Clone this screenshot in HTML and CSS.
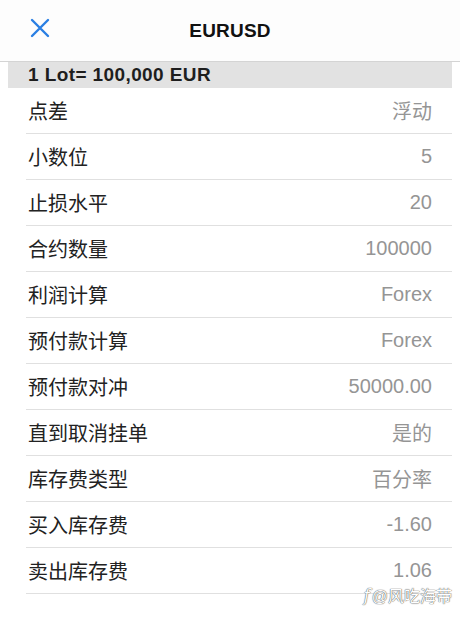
FILE: index.html
```html
<!DOCTYPE html>
<html lang="zh-CN">
<head>
    <meta charset="UTF-8">
    <meta name="viewport" content="width=device-width, initial-scale=1.0">
    <title>EURUSD</title>
    <link rel="stylesheet" href="styles.css">
</head>
<body>
    <div class="page">
        <header class="top-bar">
            <span class="close-btn">
                <svg width="20" height="20" viewBox="0 0 20 20">
                    <path d="M2 2 L18 18 M18 2 L2 18" stroke="#2a7fe3" stroke-width="2.4" stroke-linecap="round" fill="none"/>
                </svg>
            </span>
            <h1>EURUSD</h1>
        </header>

        <div class="lot-bar">1 Lot= 100,000 EUR</div>

        <ul class="spec-list">
            <li><span>点差</span><span class="val">浮动</span></li>
            <li><span>小数位</span><span class="val">5</span></li>
            <li><span>止损水平</span><span class="val">20</span></li>
            <li><span>合约数量</span><span class="val">100000</span></li>
            <li><span>利润计算</span><span class="val">Forex</span></li>
            <li><span>预付款计算</span><span class="val">Forex</span></li>
            <li><span>预付款对冲</span><span class="val">50000.00</span></li>
            <li><span>直到取消挂单</span><span class="val">是的</span></li>
            <li><span>库存费类型</span><span class="val">百分率</span></li>
            <li><span>买入库存费</span><span class="val">-1.60</span></li>
            <li><span>卖出库存费</span><span class="val">1.06</span></li>
        </ul>

        <div class="watermark"><span class="wm-icon">f</span>@风吃海带</div>
    </div>
</body>
</html>
```

FILE: styles.css
```css
* {
    margin: 0;
    padding: 0;
    box-sizing: border-box;
    font-family: 'Liberation Sans', 'Noto Sans CJK SC', sans-serif;
}

body {
    background: #fff;
    color: #222;
}

.page {
    position: relative;
    width: 460px;
    height: 627px;
    padding: 0 8px;
}

.top-bar {
    height: 62px;
    display: flex;
    align-items: center;
    justify-content: center;
    position: relative;
    background: #fdfdfd;
    border-bottom: 1px solid #d4d4d4;
    margin: 0 -8px;
}

.close-btn {
    position: absolute;
    left: 30px;
    top: 18px;
    width: 20px;
    height: 20px;
}

.top-bar h1 {
    font-size: 19px;
    font-weight: bold;
    color: #111;
    letter-spacing: 0.2px;
}

.lot-bar {
    height: 26px;
    line-height: 26px;
    background: #e2e2e2;
    padding-left: 20px;
    font-size: 19px;
    font-weight: bold;
    letter-spacing: 0.4px;
    color: #1e1e1e;
}

.spec-list {
    list-style: none;
    padding-left: 18px;
}

.spec-list li {
    height: 46px;
    display: flex;
    align-items: center;
    justify-content: space-between;
    padding: 0 20px 0 2px;
    border-bottom: 1px solid #e0e0e0;
    font-size: 20px;
    color: #222;
}

.spec-list .val {
    color: #959595;
}

.watermark {
    position: absolute;
    right: 8px;
    top: 583px;
    font-size: 16px;
    color: #fff;
    text-shadow: 0 0 1px #555, 0 0 1px #555;
    display: flex;
    align-items: center;
    gap: 2px;
}

.wm-icon {
    font-style: italic;
    font-family: 'DejaVu Serif', serif;
    font-size: 16px;
}
```
